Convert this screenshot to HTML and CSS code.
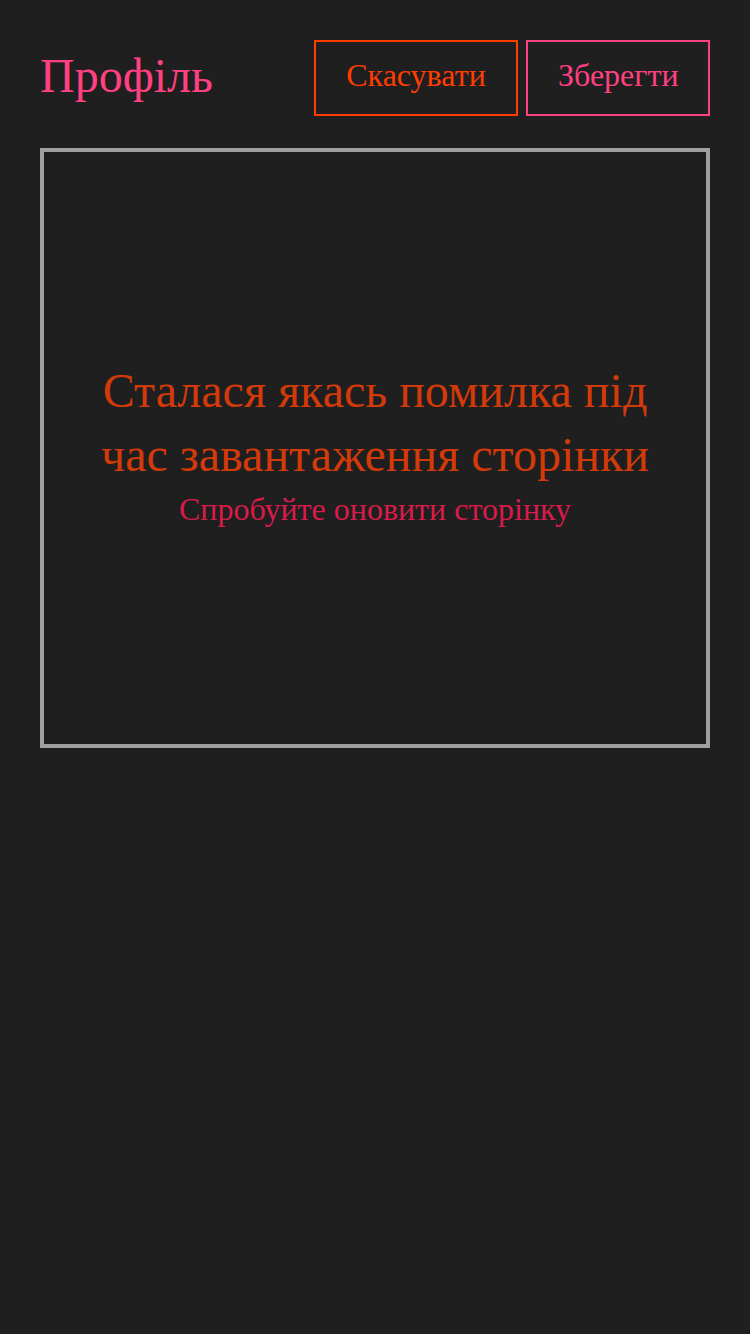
FILE: index.html
```html
<!DOCTYPE html>
<html lang="uk">
<head>
<meta charset="utf-8">
<link rel="stylesheet" href="styles.css">
</head>
<body>
<div class="page">
  <header class="header">
    <h1 class="title">Профіль</h1>
    <div class="actions">
      <button class="btn btn-cancel">Скасувати</button>
      <button class="btn btn-save">Зберегти</button>
    </div>
  </header>
  <main class="panel">
    <div class="error">
      <p class="error-title">Сталася якась помилка під час завантаження сторінки</p>
      <p class="error-hint">Спробуйте оновити сторінку</p>
    </div>
  </main>
</div>
</body>
</html>
```
FILE: styles.css
```css
html, body {
  margin: 0;
  padding: 0;
  background: #1f1f1f;
}
body {
  font-family: "Liberation Serif", serif;
  min-height: 1334px;
}
.page {
  padding: 40px 40px;
  display: flex;
  flex-direction: column;
  gap: 32px;
}
.header {
  display: flex;
  align-items: center;
  justify-content: space-between;
  height: 76px;
}
.title {
  margin: 0 0 4px;
  font-weight: normal;
  font-size: 48px;
  color: #ff4081;
  line-height: 1;
}
.actions {
  display: flex;
  gap: 8px;
  height: 76px;
}
.btn {
  background: transparent;
  font-family: "Liberation Serif", serif;
  font-size: 32px;
  padding: 0 30px 5px;
  height: 76px;
  border: 2px solid;
  cursor: pointer;
}
.btn-cancel {
  color: #ff3d00;
  border-color: #ff3d00;
  width: 204px;
}
.btn-save {
  color: #ff4081;
  border-color: #ff4081;
  width: 184px;
}
.panel {
  border: 4px solid #a0a0a0;
  height: 592px;
  display: flex;
  align-items: center;
  justify-content: center;
  padding: 0 40px;
}
.error {
  text-align: center;
  margin-top: -7px;
}
.error-title {
  margin: 0;
  font-size: 48px;
  line-height: 64px;
  color: #d23a0a;
}
.error-hint {
  margin: 0;
  font-size: 32px;
  line-height: 44px;
  color: #d81b4a;
}
```
